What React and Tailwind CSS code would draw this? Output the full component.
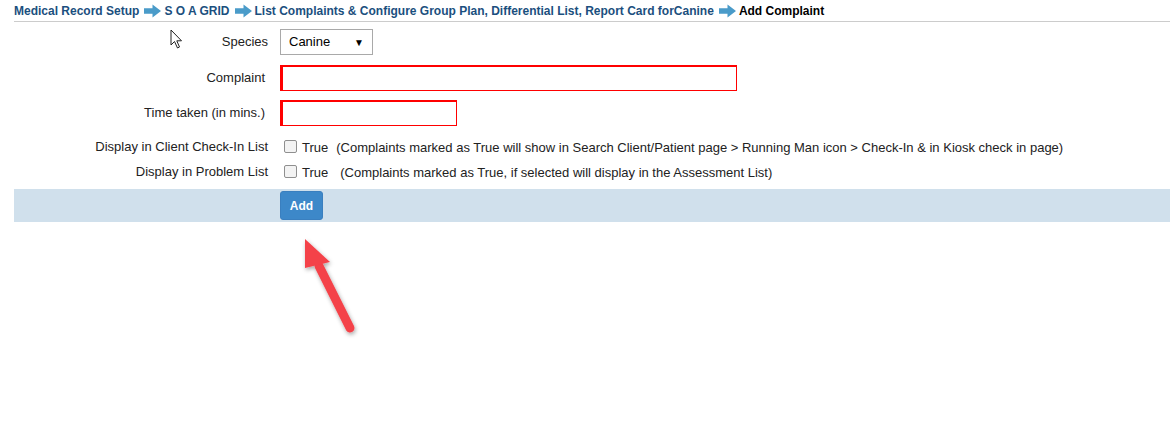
import React from 'react';

const font = { fontFamily: '"Liberation Sans", Arial, sans-serif' };

function CrumbArrow() {
  return (
    <svg width="17" height="14" viewBox="0 0 18 14" className="ml-[5px] mr-[3px] shrink-0">
      <path d="M0 4 H9 V0 L18 7 L9 14 V10 H0 Z" fill="#4a9bc9" />
    </svg>
  );
}

function Row({ label, children, h = 'h-[35px]', pr = 'pr-[12px]' }) {
  return (
    <div className={`flex items-center ${h}`}>
      <div className={`w-[266px] shrink-0 text-right ${pr} text-[13px] text-[#222]`}>{label}</div>
      <div className="flex items-center">{children}</div>
    </div>
  );
}

export default function App() {
  return (
    <div className="relative h-[421px] w-[1170px] bg-white" style={font}>
      {/* breadcrumb */}
      <div className="ml-[14px] flex h-[22px] items-center border-b border-[#cccccc] pt-[1px] text-[12px] font-bold text-[#1b4f7e]">
        <span>Medical Record Setup</span>
        <CrumbArrow />
        <span>S O A GRID</span>
        <CrumbArrow />
        <span>List Complaints &amp; Configure Group Plan, Differential List, Report Card forCanine</span>
        <CrumbArrow />
        <span className="text-black">Add Complaint</span>
      </div>

      <div className="ml-[14px] pt-[7px]">
        <Row label="Species" h="h-[26px]">
          <div className="flex h-[26px] w-[93px] items-center justify-between border border-[#a9a9a9] bg-white px-[8px] text-[13px] text-black">
            <span>Canine</span>
            <span className="text-[10px]">▼</span>
          </div>
        </Row>
        <div className="h-[10px]" />
        <Row label="Complaint" h="h-[26px]" pr="pr-[15px]">
          <div className="h-[26px] w-[457px] border-b border-l-[3px] border-r border-t-2 border-[#ff0000] bg-white" />
        </Row>
        <div className="h-[9px]" />
        <Row label="Time taken (in mins.)" h="h-[26px]" pr="pr-[15px]">
          <div className="h-[26px] w-[177px] border-b border-l-[3px] border-r border-t-2 border-[#ff0000] bg-white" />
        </Row>
        <div className="h-[8px]" />
        <Row label="Display in Client Check-In List" h="h-[25px]">
          <div className="flex items-center text-[13px] text-[#222]">
            <span className="ml-[4px] mr-[5px] h-[13px] w-[13px] rounded-[2px] border border-[#8f8f8f] bg-[#f3f3f3]" />
            <span className="mt-[2px]">True</span>
            <span className="ml-[8px] mt-[2px]">(Complaints marked as True will show in Search Client/Patient page &gt; Running Man icon &gt; Check-In &amp; in Kiosk check in page)</span>
          </div>
        </Row>
        <Row label="Display in Problem List" h="h-[25px]">
          <div className="flex items-center text-[13px] text-[#222]">
            <span className="ml-[4px] mr-[5px] h-[13px] w-[13px] rounded-[2px] border border-[#8f8f8f] bg-[#f3f3f3]" />
            <span className="mt-[2px]">True</span>
            <span className="ml-[12px] mt-[2px]">(Complaints marked as True, if selected will display in the Assessment List)</span>
          </div>
        </Row>
        <div className="mt-[5px] flex h-[33px] items-center bg-[#d0e0ec] pl-[266px]">
          <button className="h-[29px] w-[43px] rounded-[3px] border border-[#3a7fbf] bg-[#3d88c9] text-[12px] font-bold text-white">
            Add
          </button>
        </div>
      </div>

      {/* mouse cursor */}
      <svg className="absolute left-[170px] top-[29px]" width="14" height="20" viewBox="0 0 14 20">
        <path d="M1 1 V16 L4.5 12.5 L7.5 19 L9.5 18 L6.8 11.8 H11.5 Z" fill="white" stroke="#222" strokeWidth="1" strokeLinejoin="round" />
      </svg>

      {/* red annotation arrow */}
      <svg className="absolute left-[290px] top-[230px]" width="90" height="115" viewBox="0 0 90 115">
        <defs>
          <filter id="sh" x="-30%" y="-30%" width="160%" height="160%">
            <feDropShadow dx="1" dy="2" stdDeviation="2" floodColor="#000" floodOpacity="0.35" />
          </filter>
        </defs>
        <g filter="url(#sh)">
          <line x1="60" y1="98" x2="29" y2="36" stroke="#f4424a" strokeWidth="9" strokeLinecap="round" />
          <path d="M15 9 L40 32 L15 38 Z" fill="#f4424a" />
        </g>
      </svg>
    </div>
  );
}
